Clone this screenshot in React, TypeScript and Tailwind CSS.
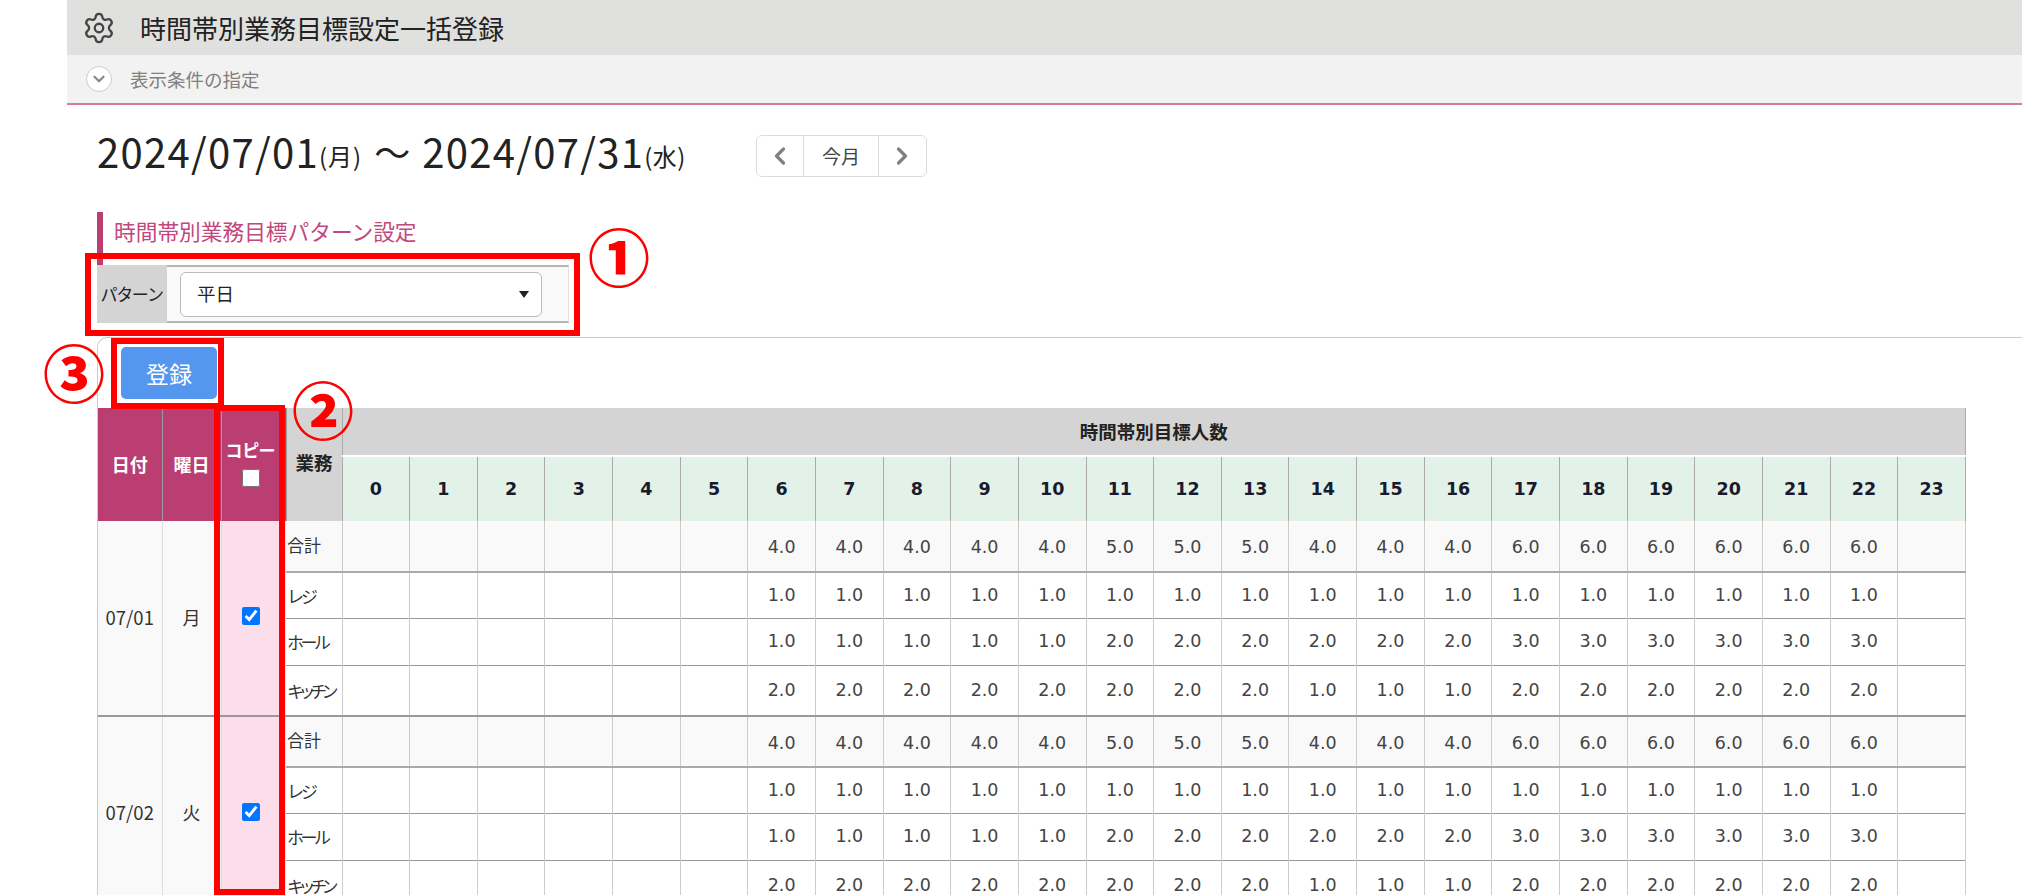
import { ChevronLeft, ChevronRight, ChevronDown, Settings } from "lucide-react";

const hours = Array.from({ length: 24 }, (_, i) => i);
const fill = (ranges: [number, number, string][]) => {
  const out: string[] = Array(24).fill("");
  ranges.forEach(([a, b, v]) => {
    for (let i = a; i <= b; i++) out[i] = v;
  });
  return out;
};
const rows = [
  { name: "合計", h: "h-[51px]", tr: "pb-[3px]", vals: fill([[6, 10, "4.0"], [11, 13, "5.0"], [14, 16, "4.0"], [17, 22, "6.0"]]), bg: "bg-[#f9f9f9]", vp: "pt-[3px]" },
  { name: "レジ", h: "h-[46px]", tr: "tracking-[-3px]", vals: fill([[6, 22, "1.0"]]), bg: "bg-white", vp: "" },
  { name: "ホール", h: "h-[47px]", tr: "tracking-[-3.5px]", vals: fill([[6, 10, "1.0"], [11, 16, "2.0"], [17, 22, "3.0"]]), bg: "bg-white", vp: "" },
  { name: "キッチン", h: "h-[51px]", tr: "tracking-[-5.5px]", vals: fill([[6, 13, "2.0"], [14, 16, "1.0"], [17, 22, "2.0"]]), bg: "bg-white", vp: "" },
];
const days = [
  { date: "07/01", wd: "月" },
  { date: "07/02", wd: "火" },
];
const jp = "[font-family:'Noto_Sans_CJK_JP','Noto_Sans',sans-serif]";

export default function App() {
  return (
    <div className="relative h-[895px] w-[2022px] overflow-hidden bg-white text-[#222] [font-family:'Noto_Sans_CJK_JP','Noto_Sans',sans-serif]">
      <div className="ml-[67px]">
        <div className="flex h-[55px] items-center bg-[#e0e0de] pl-[15px]">
          <Settings className="h-[34px] w-[34px] text-[#444]" strokeWidth={1.6} />
          <span className="ml-[24px] text-[26px] leading-none text-[#222]">時間帯別業務目標設定一括登録</span>
        </div>
        <div className="flex h-[50px] items-center border-b-2 border-[#d9799f] bg-[#f2f2f2] pl-[19px]">
          <span className="flex h-[26px] w-[26px] items-center justify-center rounded-full border border-[#ccc] bg-white">
            <ChevronDown className="h-[18px] w-[18px] text-[#888]" strokeWidth={3} />
          </span>
          <span className="ml-[18px] text-[18.5px] leading-none text-[#808080]">表示条件の指定</span>
        </div>
      </div>

      <div className="ml-[97px] flex h-[92px] items-center">
        <span className="text-[40px] leading-none tracking-[1.3px]">2024/07/01</span>
        <span className="pt-[10px] text-[24px] leading-none tracking-[1px]">(月)</span>
        <span className="mx-[12px] text-[36px] leading-none">～</span>
        <span className="text-[40px] leading-none tracking-[1.3px]">2024/07/31</span>
        <span className="pt-[10px] text-[24px] leading-none tracking-[0.5px]">(水)</span>
        <div className="mt-[10px] ml-[70px] flex h-[42px] w-[171px] items-stretch rounded-[6px] border border-[#dcdcdc] bg-white">
          <div className="flex w-[47px] items-center justify-center border-r border-[#dcdcdc]">
            <ChevronLeft className="h-[28px] w-[28px] text-[#808080]" strokeWidth={2.8} />
          </div>
          <div className="flex flex-1 items-center justify-center text-[19px] text-[#444]">今月</div>
          <div className="flex w-[48px] items-center justify-center border-l border-[#dcdcdc]">
            <ChevronRight className="h-[28px] w-[28px] text-[#808080]" strokeWidth={2.8} />
          </div>
        </div>
      </div>

      <div className="ml-[97px] mt-[15px] flex h-[53px] items-center border-l-[6px] border-[#bb3e73] pl-[11px] pb-[15px]">
        <span className="text-[21.7px] leading-none text-[#c2477d]">時間帯別業務目標パターン設定</span>
      </div>

      <div className="ml-[97px] flex h-[58px] w-[472px] items-stretch">
        <div className="flex w-[70px] items-center justify-center bg-[#d3d4d3] text-[17px] [font-feature-settings:'palt']">パターン</div>
        <div className="flex flex-1 items-center border-y-2 border-r border-[#b5b5b5] border-r-[#e2e2e2] bg-[#f9f9f9] pl-[13px]">
          <div className="flex h-[45px] w-[362px] items-center justify-between rounded-[6px] border border-[#bbb] bg-white pl-[16px] pr-[12px]">
            <span className="text-[18.5px]">平日</span>
            <span className="h-0 w-0 border-x-[5px] border-t-[7px] border-x-transparent border-t-[#222]" />
          </div>
        </div>
      </div>

      <div className="ml-[97px] mt-[14px] rounded-tl-[10px] border-l border-t border-[#ccc]">
        <div className="pl-[23px] pt-[9px]">
          <button className="h-[52px] w-[96px] rounded-[5px] bg-[#5596ef] text-[23px] text-white">登録</button>
        </div>
        <table className="mt-[9px] w-[1868px] table-fixed border-collapse text-[17.5px] [font-family:'DejaVu_Sans','Noto_Sans_CJK_JP',sans-serif]">
          <colgroup>
            <col className="w-[64px]" />
            <col className="w-[59px]" />
            <col className="w-[65px]" />
            <col className="w-[56px]" />
            {hours.map((h) => (
              <col key={h} />
            ))}
          </colgroup>
          <thead>
            <tr className="h-[48px]">
              <th rowSpan={2} className={`border-r border-[#999] bg-[#bb3e73] text-[18px] font-bold text-white ${jp}`}>日付</th>
              <th rowSpan={2} className={`border-r border-[#999] bg-[#bb3e73] text-[18px] font-bold text-white ${jp}`}>曜日</th>
              <th rowSpan={2} className={`border-r border-[#999] bg-[#bb3e73] text-[17px] font-bold leading-[20px] text-white [font-feature-settings:'palt'] ${jp}`}>
                <div className="flex flex-col items-center gap-[9px] pb-[2px] pr-[6px]">
                  <span>コピー</span>
                  <input type="checkbox" readOnly className="h-[18px] w-[18px] shrink-0" />
                </div>
              </th>
              <th rowSpan={2} className={`bg-[#d3d4d3] pb-[4px] text-[18.5px] font-bold ${jp}`}>業務</th>
              <th colSpan={24} className={`border-l border-r border-[#aaa] bg-[#d3d4d3] text-[18.5px] font-bold ${jp}`}>時間帯別目標人数</th>
            </tr>
            <tr className="h-[65px]">
              {hours.map((h) => (
                <th key={h} className="border-x border-t-2 border-[#aaa] border-t-white bg-[#e2f2e9] text-[17.5px] font-bold text-[#1a1a2e]">
                  {h}
                </th>
              ))}
            </tr>
          </thead>
          {days.map((d) => (
            <tbody key={d.date} className="border-b-2 border-[#999]">
              {rows.map((r, ri) => (
                <tr key={r.name} className={`${r.h} ${ri === 0 ? "border-b-2 border-[#aaa]" : ri < 3 ? "border-b border-[#999]" : ""}`}>
                  {ri === 0 && (
                    <>
                      <td rowSpan={4} className="border-r border-[#ddd] bg-[#f9f9f9] text-center text-[#333]">
                        <span className={`text-[18.5px] ${jp}`}>{d.date}</span>
                      </td>
                      <td rowSpan={4} className="border-r border-[#ddd] bg-[#f9f9f9] text-center text-[#333]">
                        <span className={`text-[18px] ${jp}`}>{d.wd}</span>
                      </td>
                      <td rowSpan={4} className="bg-[#fcdeea] pb-[5px] pr-[6px] text-center">
                        <input type="checkbox" defaultChecked className="h-[18px] w-[18px] align-middle" />
                      </td>
                    </>
                  )}
                  <td className={`${r.bg} ${r.tr} whitespace-nowrap pl-[1px] text-[17px] text-[#333] ${jp}`}>{r.name}</td>
                  {r.vals.map((v, i) => (
                    <td key={i} className={`${r.bg} ${r.vp} border-x border-[#ccc] text-center text-[#444]`}>
                      {v}
                    </td>
                  ))}
                </tr>
              ))}
            </tbody>
          ))}
        </table>
      </div>

      <div className="absolute left-[85px] top-[253px] h-[83px] w-[495px] border-[6px] border-[#ff0000]" />
      <div className="absolute left-[111px] top-[338px] h-[71px] w-[113px] border-[6px] border-[#ff0000]" />
      <div className="absolute left-[214px] top-[405px] h-[490px] w-[71px] border-[6px] border-[#ff0000]" />
      <span className="absolute left-[588px] top-[218px] text-[62px] font-black leading-[75px] text-[#ff0000]">①</span>
      <span className="absolute left-[292px] top-[371px] text-[62px] font-black leading-[75px] text-[#ff0000]">②</span>
      <span className="absolute left-[43px] top-[334px] text-[62px] font-black leading-[75px] text-[#ff0000]">③</span>
    </div>
  );
}
